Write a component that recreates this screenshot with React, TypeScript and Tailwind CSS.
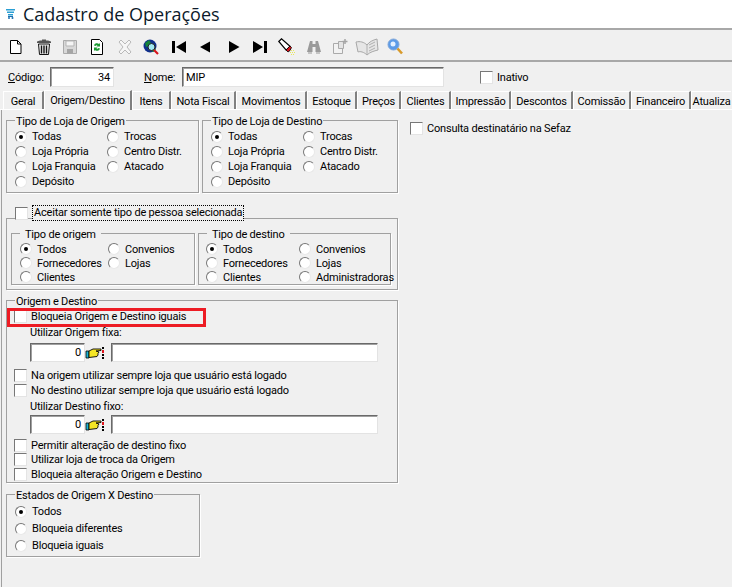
import type { ReactNode } from "react";

const FONT = "font-['Roboto',Arial,sans-serif] text-[11px] leading-[14px] text-black tracking-[-0.2px]";

const TABS = [
  { label: "Geral", w: "w-[41px]" },
  { label: "Origem/Destino", w: "w-[88px]", active: true },
  { label: "Itens", w: "w-[39px]" },
  { label: "Nota Fiscal", w: "w-[65px]" },
  { label: "Movimentos", w: "w-[71px]" },
  { label: "Estoque", w: "w-[50px]" },
  { label: "Preços", w: "w-[44px]" },
  { label: "Clientes", w: "w-[50px]" },
  { label: "Impressão", w: "w-[60px]" },
  { label: "Descontos", w: "w-[62px]" },
  { label: "Comissão", w: "w-[58px]" },
  { label: "Financeiro", w: "w-[60px]" },
  { label: "Atualiza", w: "w-[40px]" },
];

const Radio = ({ label, checked }: { label: string; checked?: boolean }) => (
  <div className="flex items-center h-full whitespace-nowrap">
    <span className="w-3 h-3 shrink-0 rounded-full bg-white border border-t-[#777] border-l-[#777] border-r-[#e8e8e8] border-b-[#e8e8e8] flex items-center justify-center">
      {checked && <span className="w-1 h-1 rounded-full bg-black" />}
    </span>
    <span className="ml-[5px] pt-px">{label}</span>
  </div>
);

const Check = ({ label, className = "" }: { label?: string; className?: string }) => (
  <div className={`flex items-center whitespace-nowrap ${className}`}>
    <span className="w-[13px] h-[13px] shrink-0 bg-white border border-t-[#777] border-l-[#777] border-r-[#e4e4e4] border-b-[#e4e4e4]" />
    {label && <span className="ml-[4px] pt-px">{label}</span>}
  </div>
);

const Group = ({
  title,
  className = "",
  children,
}: {
  title: ReactNode;
  className?: string;
  children?: ReactNode;
}) => (
  <div className={`relative border border-[#a0a0a0] shadow-[1px_1px_0_#fff] ${className}`}>
    <div className="absolute -top-[6px] left-[8px] bg-[#f0f0f0] px-px whitespace-nowrap">{title}</div>
    {children}
  </div>
);

const Input = ({ value, className = "", right }: { value?: string; className?: string; right?: boolean }) => (
  <div
    className={`bg-white border border-t-[#696969] border-l-[#696969] border-r-[#e3e3e3] border-b-[#e3e3e3] shadow-[inset_1px_1px_0_#a0a0a0] px-[3px] pt-px flex items-center ${right ? "justify-end" : ""} ${className}`}
  >
    {value}
  </div>
);

const Lookup = ({ h }: { h: string }) => (
  <div className={`flex items-stretch ml-[16px] ${h}`}>
    <Input value="0" right className="w-[55px]" />
    <div className="w-[20px] bg-[#f0f0f0] flex items-center justify-center">
      <svg width="20" height="16" viewBox="0 0 20 16">
        <path d="M1 6h3v7H1z" fill="#19b5d6" stroke="#000" strokeWidth="0.8" />
        <path d="M4 6l4-2 8 0v1.500l-5 .5 3 1-1 1.500 0 1.500-1 1.500-8 1z" fill="#f6e625" stroke="#000" strokeWidth="0.9" />
        <path d="M17 2h2v2h-2zM17 9h2v2h-2zM17 12h2v2h-2z" fill="#000" />
        <path d="M17 5h2v3h-2z" fill="#e0141c" />
      </svg>
    </div>
    <Input className="w-[267px] ml-[6px]" />
  </div>
);

const Tool = ({ className = "", children }: { className?: string; children: ReactNode }) => (
  <svg viewBox="0 0 16 16" width="16" height="16" className={`shrink-0 ${className}`}>
    {children}
  </svg>
);

const Toolbar = () => (
  <div className="h-[32px] flex items-center pl-[8px] pt-[3px] border-b-2 border-[#a8a8a8]">
    <Tool>
      <path d="M2.500 1.500h7l3.500 3.500v9.500H2.500z" fill="#fff" stroke="#000" />
      <path d="M9.500 1.500v3.500h3.500" fill="none" stroke="#000" />
    </Tool>
    <Tool className="ml-[12px]">
      <path d="M1 4h14v-1.500l-3-1H10V.5H6v1H4l-3 1z" fill="#555" />
      <path d="M2.500 5h11l-1 10.500h-9z" fill="#f0f0f0" stroke="#111" />
      <path d="M5.500 6.500v8M8 6.500v8M10.500 6.500v8" stroke="#111" strokeWidth="1.400" />
    </Tool>
    <Tool className="ml-[10px]">
      <path d="M1.500 1.500h13v13h-13z" fill="#d8d8d8" stroke="#aaa" />
      <path d="M4 2h8v5H4z" fill="#f4f4f4" stroke="#b5b5b5" />
      <path d="M5 10h6v4.500H5z" fill="#a5a5a5" />
    </Tool>
    <Tool className="ml-[11px]">
      <path d="M2.500 .5h8l3 3v12h-11z" fill="#fff" stroke="#000" />
      <path d="M5 6.500a3 3 0 0 1 5-1.500l1-1v3.500H7.500l1-1a1.500 1.500 0 0 0-2 .5z" fill="#1c9a33" />
      <path d="M11 9.500a3 3 0 0 1-5 1.500l-1 1V8.500h3.500l-1 1a1.500 1.500 0 0 0 2-.5z" fill="#1c9a33" />
    </Tool>
    <Tool className="ml-[12px]">
      <path d="M2 3l2-2 4 4 4-4 2 2-4 5 4 5-2 2-4-4-4 4-2-2 4-5z" fill="#f6f6f6" stroke="#b9b9b9" />
    </Tool>
    <Tool className="ml-[10px]">
      <circle cx="7" cy="7" r="6.500" fill="#0f2f8c" />
      <path d="M2 4l4-3 2 3-2 3-3 1zM8 12l3-3 2 1-2 3z" fill="#14833a" />
      <circle cx="8.500" cy="8" r="3.500" fill="#9fe8f2" stroke="#222" />
      <path d="M11 11l4 4" stroke="#d6141c" strokeWidth="2.200" />
    </Tool>
    <Tool className="ml-[12px]">
      <path d="M1 2h3v12H1zM15 2v12L5 8z" fill="#000" />
    </Tool>
    <Tool className="ml-[10px]">
      <path d="M13 2.500v11L3 8z" fill="#000" />
    </Tool>
    <Tool className="ml-[13px]">
      <path d="M3 2v12l10.500-6z" fill="#000" />
    </Tool>
    <Tool className="ml-[10px]">
      <path d="M1 2v12l10-6zM12 2h3v12h-3z" fill="#000" />
    </Tool>
    <svg viewBox="0 0 18 18" width="18" height="18" className="ml-[10px] shrink-0 -mr-[2px]">
      <path d="M.8 3.500L3.500.8l8.500 7.500-3.800 3.800z" fill="#fff" stroke="#000" strokeWidth="1.200" />
      <path d="M8 12l4-4 1.500 1.500-1.500 3-2 1.500z" fill="#d6141c" stroke="#000" strokeWidth="0.8" />
      <path d="M13 12h1v1h-1zM15 12h1v1h-1zM12 14h1v1h-1zM14 14h1v1h-1zM16 14h1v1h-1zM13 16h1v1h-1zM15 16h1v1h-1z" fill="#e8e85a" />
    </svg>
    <Tool className="ml-[12px]">
      <path d="M4 2h2.500v3h3V2H12l3 11h-5.500V8h-3v5H1z" fill="#9a9a9a" />
      <path d="M2 13h4v2H2zM10 13h4v2h-4z" fill="#c4c4c4" />
    </Tool>
    <Tool className="ml-[10px]">
      <path d="M1.500 4.500h9v10h-9z" fill="#f2f2f2" stroke="#aaa" />
      <path d="M6.500 2.500h5v7h-5z" fill="#e4e4e4" stroke="#aaa" />
      <path d="M13 0v5M10.500 2.500h5" stroke="#a5a5a5" strokeWidth="1.500" />
    </Tool>
    <svg viewBox="0 0 24 18" width="24" height="18" className="ml-[7px] shrink-0">
      <path d="M1 4c4-1 8 0 11 3 2-3 6-5 10-6l1 11c-4 1-8 2-11 5C9 14 5 13 3 14z" fill="#e6e6e6" stroke="#a8a8a8" />
      <path d="M12 7v10M14 7l6-3M14 10l6-3M14 13l6-3" stroke="#b0b0b0" fill="none" />
    </svg>
    <svg viewBox="0 0 16 18" width="16" height="18" className="ml-[8px] shrink-0">
      <circle cx="6.500" cy="6.500" r="5.500" fill="#5c9be8" stroke="#7fa6d8" />
      <circle cx="6" cy="6" r="2.500" fill="#e4f0ff" />
      <path d="M10.500 10.500l4.500 5" stroke="#d89a2a" strokeWidth="2.600" />
    </svg>
  </div>
);

export default function App() {
  return (
    <div className={`w-[732px] h-[587px] overflow-hidden bg-[#f0f0f0] flex flex-col ${FONT}`}>
      {/* Title */}
      <div className="h-[30px] shrink-0 bg-white border-b-2 border-[#a8a8a8] flex items-center pl-[6px]">
        <svg width="9" height="10" viewBox="0 0 9 10" className="shrink-0">
          <path d="M0 0h9v1.500H0zM1 2.500h7V4H1zM2 5h5v1.500H2z" fill="#2a9fd4" />
          <path d="M2 7h5v1H2z" fill="#1b6fb0" />
          <circle cx="3" cy="9" r="1" fill="#1b6fb0" />
          <circle cx="6.500" cy="9" r="1" fill="#1b6fb0" />
        </svg>
        <span className="ml-[8px] font-['Open_Sans',sans-serif] text-[18px] leading-[24px] tracking-normal text-[#0c1a2a]">
          Cadastro de Operações
        </span>
      </div>

      <Toolbar />

      {/* Codigo / Nome */}
      <div className="h-[28px] shrink-0 flex items-center pl-[8px] pt-[2px]">
        <span className="w-[42px] pt-px"><u>C</u>ódigo:</span>
        <Input value="34" right className="w-[64px] h-[20px]" />
        <span className="ml-[30px] w-[38px] pt-px"><u>N</u>ome:</span>
        <Input value="MIP" className="w-[262px] h-[20px]" />
        <Check label="Inativo" className="ml-[36px]" />
      </div>

      {/* Tabs */}
      <div className="h-[20px] shrink-0 flex items-end pl-[3px] border-b border-white whitespace-nowrap">
        {TABS.map((t) =>
          t.active ? (
            <div
              key={t.label}
              className={`${t.w} h-[20px] -mb-px z-10 bg-[#f0f0f0] border-t border-l border-white border-r-2 border-r-[#808080] flex items-start justify-center pt-[3px] shrink-0`}
            >
              {t.label}
            </div>
          ) : (
            <div
              key={t.label}
              className={`${t.w} h-[18px] pt-[2px] border-t border-l border-white border-r-2 border-r-[#808080] flex items-center justify-center shrink-0 last:border-r-0`}
            >
              {t.label}
            </div>
          ),
        )}
      </div>

      {/* Tab page */}
      <div className="flex-1 flex border-l border-[#a0a0a0] ml-px pl-[4px] pt-[10px]">
        <div className="w-[392px] shrink-0 flex flex-col">
          <div className="flex gap-[3px]">
            <Group title="Tipo de Loja de Origem" className="w-[193px] h-[73px] pt-[8px] pl-[8px]">
              <div className="grid grid-cols-[92px_1fr] auto-rows-[15px]">
                <Radio label="Todas" checked />
                <Radio label="Trocas" />
                <Radio label="Loja Própria" />
                <Radio label="Centro Distr." />
                <Radio label="Loja Franquia" />
                <Radio label="Atacado" />
                <Radio label="Depósito" />
              </div>
            </Group>
            <Group title="Tipo de Loja de Destino" className="w-[196px] h-[73px] pt-[8px] pl-[8px]">
              <div className="grid grid-cols-[92px_1fr] auto-rows-[15px]">
                <Radio label="Todas" checked />
                <Radio label="Trocas" />
                <Radio label="Loja Própria" />
                <Radio label="Centro Distr." />
                <Radio label="Loja Franquia" />
                <Radio label="Atacado" />
                <Radio label="Depósito" />
              </div>
            </Group>
          </div>

          <div className="relative mt-[25px] w-[392px] h-[72px] border border-[#a0a0a0] shadow-[1px_1px_0_#fff] flex gap-[3px] pl-[4px] pt-[14px]">
            <div className="absolute -top-[13px] left-[8px] flex items-center">
              <span className="w-[13px] h-[13px] bg-white border border-t-[#777] border-l-[#777] border-r-[#e4e4e4] border-b-[#e4e4e4]" />
              <span className="ml-[5px] px-px bg-[#f0f0f0] outline-1 outline-dotted outline-black whitespace-nowrap">
                Aceitar somente tipo de pessoa selecionada
              </span>
            </div>
            <Group title={<span className="px-[4px]">Tipo de origem</span>} className="w-[184px] h-[52px] pt-[8px] pl-[8px]">
              <div className="grid grid-cols-[88px_1fr] auto-rows-[14px]">
                <Radio label="Todos" checked />
                <Radio label="Convenios" />
                <Radio label="Fornecedores" />
                <Radio label="Lojas" />
                <Radio label="Clientes" />
              </div>
            </Group>
            <Group title={<span className="px-[4px]">Tipo de destino</span>} className="w-[193px] h-[52px] pt-[8px] pl-[7px]">
              <div className="grid grid-cols-[93px_1fr] auto-rows-[14px]">
                <Radio label="Todos" checked />
                <Radio label="Convenios" />
                <Radio label="Fornecedores" />
                <Radio label="Lojas" />
                <Radio label="Clientes" />
                <Radio label="Administradoras" />
              </div>
            </Group>
          </div>

          <Group title="Origem e Destino" className="mt-[10px] w-[392px] h-[183px] pl-[7px] pt-[8px]">
            <div className="absolute left-0 top-[7px] w-[199px] h-[19px] border-[3px] border-[#ed1c24]" />
            <Check label="Bloqueia Origem e Destino iguais" className="h-[15px]" />
            <div className="ml-[16px] mt-[2px] h-[14px]">Utilizar Origem fixa:</div>
            <Lookup h="h-[19px] mt-[3px]" />
            <Check label="Na origem utilizar sempre loja que usuário está logado" className="h-[15px] mt-[6px]" />
            <Check label="No destino utilizar sempre loja que usuário está logado" className="h-[15px]" />
            <div className="ml-[16px] mt-[2px] h-[14px]">Utilizar Destino fixo:</div>
            <Lookup h="h-[19px] mt-px" />
            <Check label="Permitir alteração de destino fixo" className="h-[14px] mt-[4px]" />
            <Check label="Utilizar loja de troca da Origem" className="h-[15px]" />
            <Check label="Bloqueia alteração Origem e Destino" className="h-[14px]" />
          </Group>

          <Group title="Estados de Origem X Destino" className="mt-[11px] w-[194px] h-[63px] pt-[8px] pl-[8px]">
            <div className="grid auto-rows-[17px]">
              <Radio label="Todos" checked />
              <Radio label="Bloqueia diferentes" />
              <Radio label="Bloqueia iguais" />
            </div>
          </Group>
        </div>

        <Check label="Consulta destinatário na Sefaz" className="ml-[12px] h-[14px] mt-px self-start" />
      </div>
    </div>
  );
}
